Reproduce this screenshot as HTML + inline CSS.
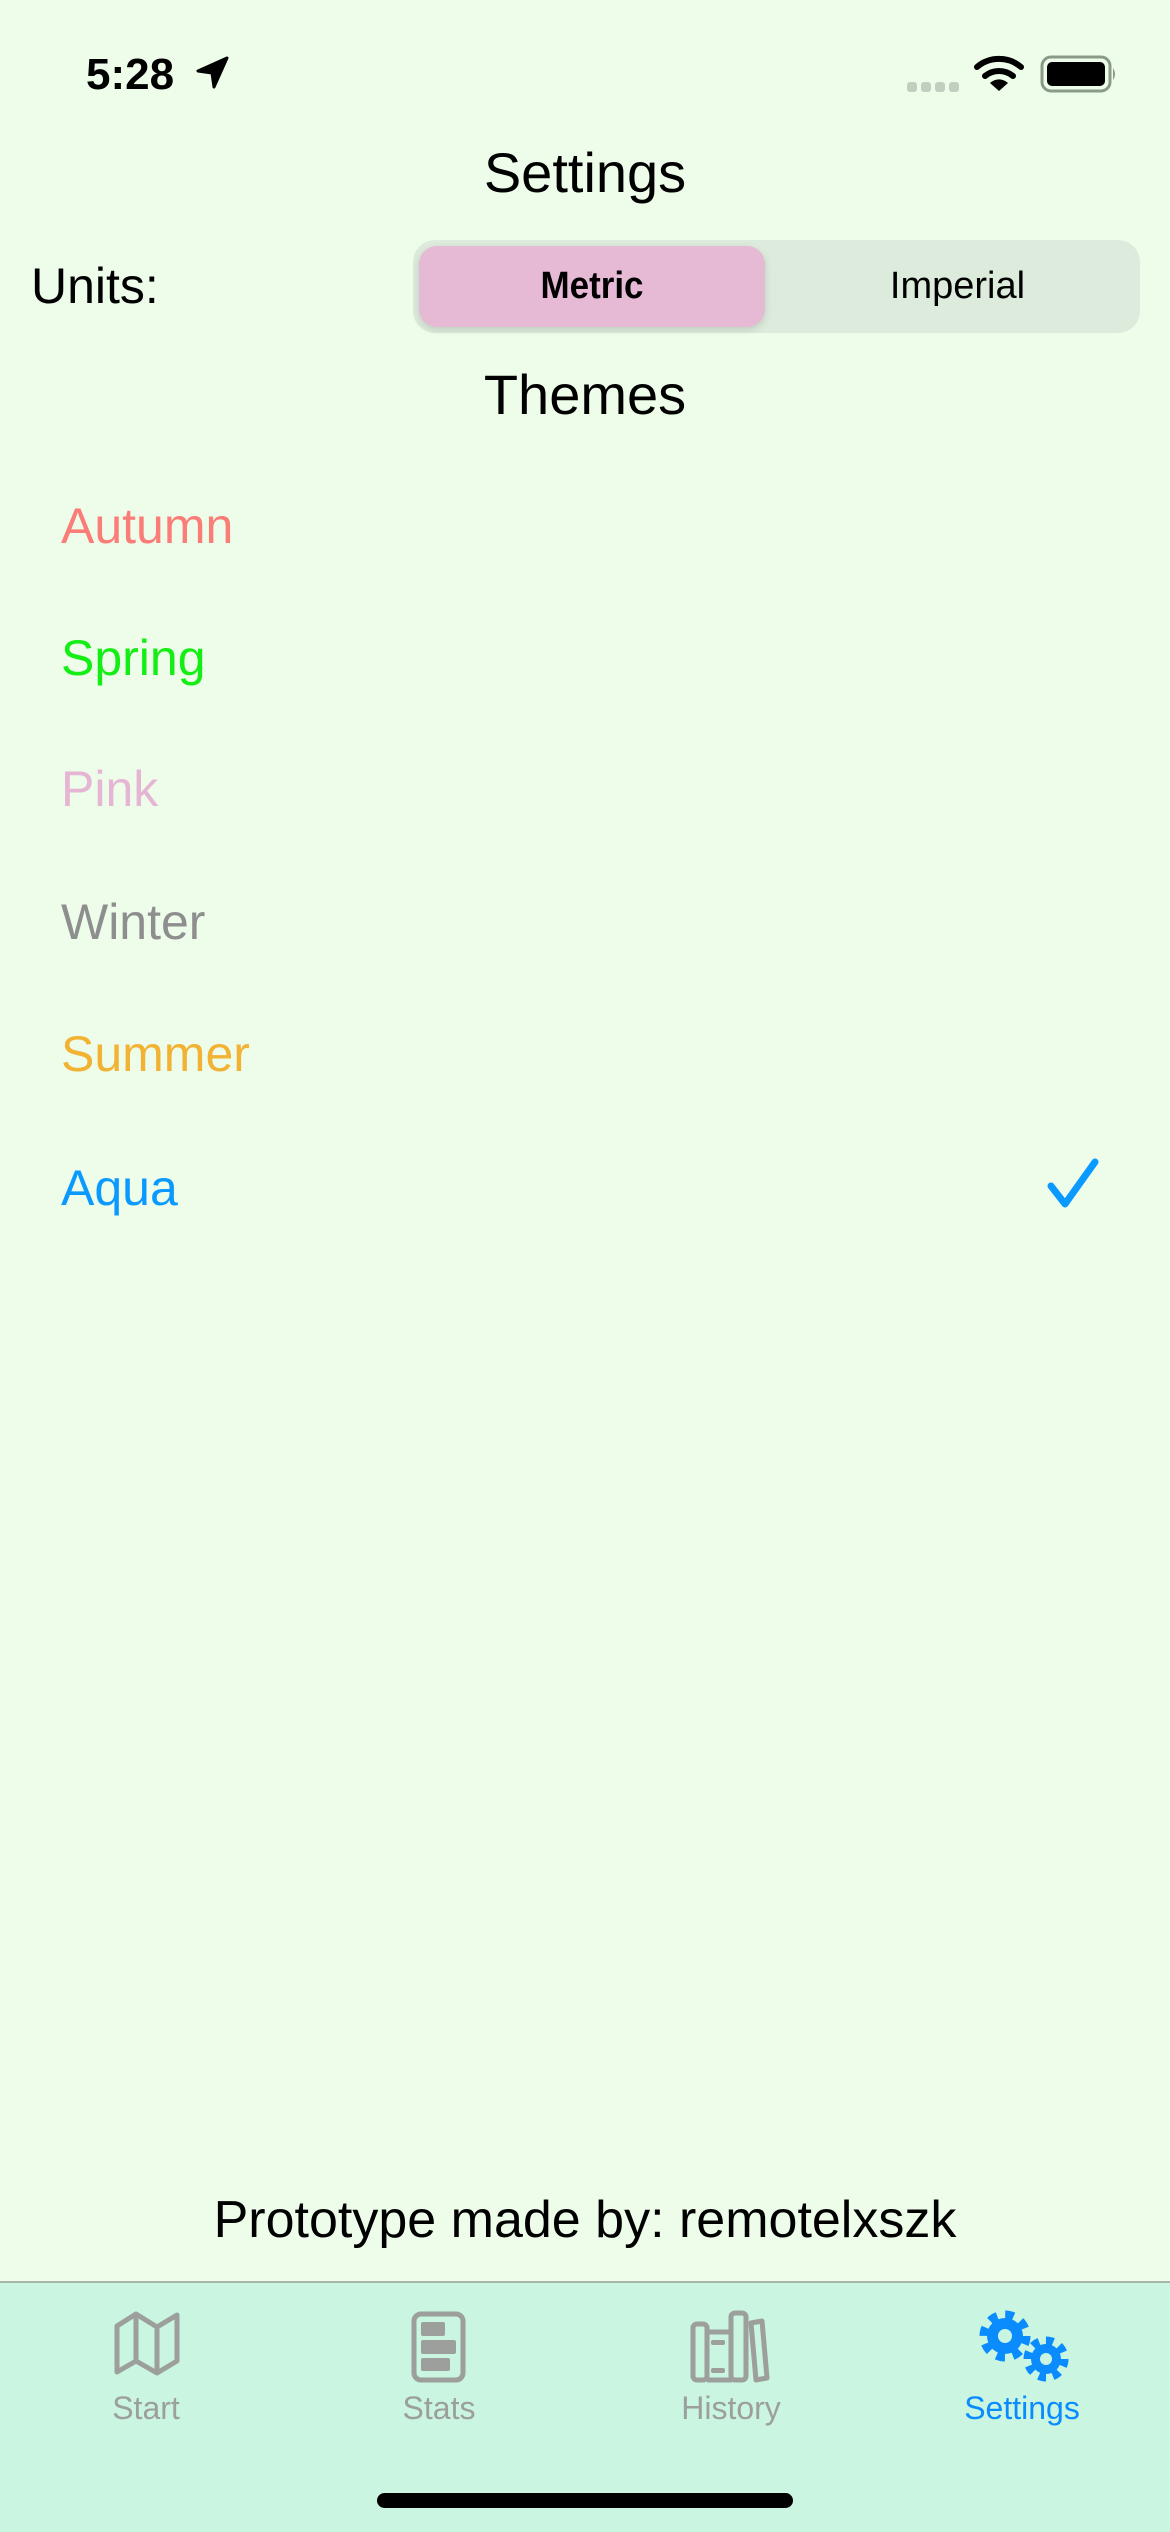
<!DOCTYPE html>
<html><head><meta charset="utf-8"><style>
*{margin:0;padding:0;box-sizing:border-box}
body{width:1170px;height:2532px;background:#edfdea;font-family:"Liberation Sans",sans-serif;position:relative;overflow:hidden}
.a{position:absolute;white-space:nowrap}
.row{left:61px;font-size:50px;height:60px;line-height:60px}
.tl{width:200px;text-align:center;top:2389px;font-size:32px;line-height:38px;color:#9c9f9c}
</style></head><body>
<div class="a" style="left:86px;top:50px;font-size:44px;font-weight:bold;line-height:50px;color:#000">5:28</div>
<svg class="a" style="left:196px;top:56px" width="34" height="34" viewBox="0 0 34 34"><path d="M31 2 L2 15 L16 17 L18 31 Z" fill="#000" stroke="#000" stroke-width="3" stroke-linejoin="round"/></svg>
<svg class="a" style="left:900px;top:50px" width="220" height="50" viewBox="900 50 220 50">
<g fill="#c2cfc0"><rect x="907" y="82" width="10" height="10" rx="3"/><rect x="921" y="82" width="10" height="10" rx="3"/><rect x="935" y="82" width="10" height="10" rx="3"/><rect x="949" y="82" width="10" height="10" rx="3"/></g>
<g fill="none" stroke="#000" stroke-width="6" stroke-linecap="round"><path d="M977 67 A34 34 0 0 1 1021 67"/><path d="M985 76 A22 22 0 0 1 1013 76"/></g>
<path d="M999 91 L990 83 A13 13 0 0 1 1008 83 Z" fill="#000"/>
<rect x="1042" y="57" width="68" height="34" rx="9" fill="none" stroke="#8a9a88" stroke-width="3"/>
<rect x="1047" y="62" width="58" height="24" rx="5" fill="#000"/>
<path d="M1113 68 Q1117 74 1113 80 Z" fill="#8a9a88"/>
</svg>
<div class="a" style="left:0;width:1170px;text-align:center;top:141px;font-size:56px;line-height:64px;color:#000">Settings</div>
<div class="a" style="left:31px;top:256px;font-size:50px;line-height:60px;color:#000">Units:</div>
<div class="a" style="left:413px;top:240px;width:727px;height:93px;border-radius:22px;background:#dcebdc"></div>
<div class="a" style="left:419px;top:246px;width:346px;height:81px;border-radius:18px;background:#e6b9d5;box-shadow:0 3px 8px rgba(0,0,0,0.12)"></div>
<div class="a" style="left:419px;top:246px;width:346px;height:81px;line-height:81px;text-align:center;font-size:38px;color:#000;font-weight:bold;transform:scaleX(0.92)">Metric</div>
<div class="a" style="left:781px;top:246px;width:353px;height:81px;line-height:81px;text-align:center;font-size:38px;color:#000">Imperial</div>
<div class="a" style="left:0;width:1170px;text-align:center;top:363px;font-size:56px;line-height:64px;color:#000">Themes</div>
<div class="a row" style="top:496px;color:#fa7d78">Autumn</div>
<div class="a row" style="top:628px;color:#14ee14">Spring</div>
<div class="a row" style="top:759px;color:#e6b5d3">Pink</div>
<div class="a row" style="top:892px;color:#8e8e8e">Winter</div>
<div class="a row" style="top:1024px;color:#f2b233">Summer</div>
<div class="a row" style="top:1158px;color:#0a9aff">Aqua</div>
<svg class="a" style="left:1045px;top:1158px" width="56" height="52" viewBox="0 0 56 52"><path d="M6 28 L20 46 L50 4" fill="none" stroke="#0a9aff" stroke-width="7" stroke-linecap="round" stroke-linejoin="round"/></svg>
<div class="a" style="left:0;width:1170px;text-align:center;top:2189px;font-size:52px;line-height:62px;color:#000">Prototype made by: remotelxszk</div>
<div class="a" style="left:0;top:2281px;width:1170px;height:251px;background:#c9f5e1;border-top:2px solid #a9b4ab"></div>
<svg class="a" style="left:0;top:2281px" width="1170" height="251" viewBox="0 2281 1170 251">
<g fill="none" stroke="#9c9f9c" stroke-width="5" stroke-linejoin="round">
<path d="M117 2326 L136 2314 L157 2327 L177 2315 L177 2361 L157 2373 L136 2361 L117 2372 Z"/>
<path d="M136 2314 L136 2361 M157 2327 L157 2373"/>
<rect x="414" y="2314" width="49" height="66" rx="7"/>
<rect x="693" y="2324" width="14" height="56" rx="4"/>
<path d="M707 2332 H731 V2380 H707"/>
<rect x="731" y="2313" width="15" height="67" rx="4"/>
<path d="M751 2323 L762 2321 L767 2378 L756 2380 Z"/>
</g>
<g fill="#9c9f9c"><rect x="421" y="2322" width="24" height="14" rx="2"/><rect x="421" y="2340" width="35" height="14" rx="2"/><rect x="421" y="2358" width="29" height="13" rx="2"/>
<rect x="711" y="2340" width="14" height="5" rx="2"/><rect x="711" y="2368" width="14" height="5" rx="2"/></g>
<g>
<circle cx="1005" cy="2336" r="21" fill="none" stroke="#0a8cff" stroke-width="9" stroke-dasharray="8.5 8"/>
<circle cx="1005" cy="2336" r="18" fill="#0a8cff"/><circle cx="1005" cy="2336" r="7" fill="#c9f5e1"/>
<circle cx="1046" cy="2359" r="18.5" fill="none" stroke="#0a8cff" stroke-width="8" stroke-dasharray="7.5 7"/>
<circle cx="1046" cy="2359" r="15" fill="#0a8cff"/><circle cx="1046" cy="2359" r="6" fill="#c9f5e1"/>
</g>
<rect x="377" y="2493" width="416" height="15" rx="7.5" fill="#000"/>
</svg>
<div class="a tl" style="left:46px">Start</div>
<div class="a tl" style="left:339px">Stats</div>
<div class="a tl" style="left:631px">History</div>
<div class="a tl" style="left:922px;color:#0a8cff">Settings</div>
</body></html>
